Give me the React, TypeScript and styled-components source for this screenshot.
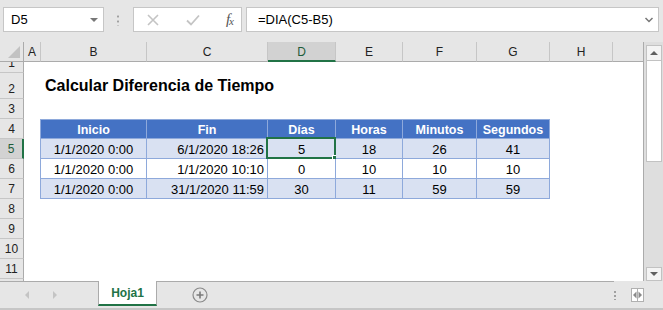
import React from 'react'
import styled, { createGlobalStyle } from 'styled-components'

const GREEN = '#217346'
const UI_FONT = `'Liberation Sans', Arial, sans-serif`

const COLUMNS = [
  { key: 'A', width: 17 },
  { key: 'B', width: 106 },
  { key: 'C', width: 121 },
  { key: 'D', width: 68 },
  { key: 'E', width: 67 },
  { key: 'F', width: 74 },
  { key: 'G', width: 73 },
  { key: 'H', width: 63 },
]
const GRID_TEMPLATE = `24px ${COLUMNS.map((c) => `${c.width}px`).join(' ')} 1fr`

type Align = 'center' | 'right'
type Variant = 'head' | 'band' | 'plain'

interface TableColumn {
  title: string
  align: Align
}

const TABLE_COLUMNS: TableColumn[] = [
  { title: 'Inicio', align: 'center' },
  { title: 'Fin', align: 'right' },
  { title: 'Días', align: 'center' },
  { title: 'Horas', align: 'center' },
  { title: 'Minutos', align: 'center' },
  { title: 'Segundos', align: 'center' },
]

const TABLE_ROWS = [
  ['1/1/2020 0:00', '6/1/2020 18:26', '5', '18', '26', '41'],
  ['1/1/2020 0:00', '1/1/2020 10:10', '0', '10', '10', '10'],
  ['1/1/2020 0:00', '31/1/2020 11:59', '30', '11', '59', '59'],
]

const ROW_HEIGHTS: Record<number, number> = { 1: 11, 2: 26 }
const SELECTED_ROW = 5
const SELECTED_COL = 'D'

const GlobalStyle = createGlobalStyle`
  html, body {
    margin: 0;
    padding: 0;
    background: #e6e6e6;
    overflow: hidden;
  }
  * {
    box-sizing: border-box;
  }
`

export default function App() {
  const sheetRows = Array.from({ length: 11 }, (_, i) => i + 1)

  return (
    <>
      <GlobalStyle />
      <Window>
        <FormulaBar>
          <NameBox>
            <span>D5</span>
            <DropTriangle />
          </NameBox>
          <VerticalDots />
          <ButtonsBox>
            <svg width="14" height="14" viewBox="0 0 14 14">
              <path d="M2 2 L12 12 M12 2 L2 12" stroke="#c4c4c4" strokeWidth="1.6" fill="none" />
            </svg>
            <svg width="16" height="14" viewBox="0 0 16 14">
              <path d="M2 7.5 L6 11.5 L14 2.5" stroke="#c4c4c4" strokeWidth="1.8" fill="none" />
            </svg>
            <FxLabel>
              f<sub>x</sub>
            </FxLabel>
          </ButtonsBox>
          <FormulaInput>
            <span>=DIA(C5-B5)</span>
            <svg width="10" height="8" viewBox="0 0 10 8">
              <path d="M1.5 2 L5 5.5 L8.5 2" stroke="#777" strokeWidth="1.5" fill="none" />
            </svg>
          </FormulaInput>
        </FormulaBar>

        <Main>
          <Sheet>
            <SheetRow $height={20}>
              <CornerCell>
                <CornerTriangle />
              </CornerCell>
              {COLUMNS.map((col) => (
                <ColHeader key={col.key} $selected={col.key === SELECTED_COL}>
                  {col.key}
                </ColHeader>
              ))}
              <ColHeaderFiller />
            </SheetRow>

            {sheetRows.map((rowNum) => (
              <SheetRow key={rowNum} $height={ROW_HEIGHTS[rowNum] ?? 20}>
                <RowHeader $selected={rowNum === SELECTED_ROW}>{rowNum}</RowHeader>
                <Cell />
                {renderRowCells(rowNum)}
                <Cell />
                <Cell />
              </SheetRow>
            ))}
            <SheetRow $height={2}>
              <RowHeader $selected={false} />
            </SheetRow>
          </Sheet>

          <VScroll>
            <ScrollButton>
              <TriangleUp />
            </ScrollButton>
            <ScrollThumb />
            <ScrollTrack />
            <ScrollButton $small>
              <TriangleDown />
            </ScrollButton>
          </VScroll>
        </Main>

        <TabBar>
          <TabNav>
            <NavArrow $dir="left" />
            <NavArrow $dir="right" />
          </TabNav>
          <SheetTab>Hoja1</SheetTab>
          <AddSheet>
            <svg width="16" height="16" viewBox="0 0 16 16">
              <circle cx="8" cy="8" r="7" stroke="#8a8a8a" strokeWidth="1.2" fill="none" />
              <path d="M8 4.5 V11.5 M4.5 8 H11.5" stroke="#7a7a7a" strokeWidth="1.6" />
            </svg>
          </AddSheet>
          <TabSpacer />
          <TabDots />
          <SplitBox>
            <svg width="13" height="14" viewBox="0 0 13 14">
              <rect x="0.5" y="0.5" width="12" height="13" fill="#fff" stroke="#b0b0b0" />
              <path d="M6.5 1 V13" stroke="#b0b0b0" />
              <path d="M5.5 3.5 L2 7 L5.5 10.5 Z" fill="#8a8a8a" />
              <path d="M7.5 3.5 L11 7 L7.5 10.5 Z" fill="#8a8a8a" />
            </svg>
          </SplitBox>
        </TabBar>
      </Window>
    </>
  )
}

function renderRowCells(rowNum: number) {
  if (rowNum === 2) {
    return (
      <>
        <TitleCell>Calcular Diferencia de Tiempo</TitleCell>
        <Cell />
        <Cell />
        <Cell />
        <Cell />
        <Cell />
      </>
    )
  }
  if (rowNum === 4) {
    return TABLE_COLUMNS.map((col, i) => (
      <TableCell key={col.title} $variant="head" $align="center" $first={i === 0} $top>
        {col.title}
      </TableCell>
    ))
  }
  if (rowNum >= 5 && rowNum <= 7) {
    const data = TABLE_ROWS[rowNum - 5]
    const variant: Variant = rowNum === 6 ? 'plain' : 'band'
    return data.map((value, i) => {
      const selected = rowNum === SELECTED_ROW && i === 2
      return (
        <TableCell key={i} $variant={variant} $align={TABLE_COLUMNS[i].align} $first={i === 0}>
          {value}
          {selected && (
            <Selection>
              <FillHandle />
            </Selection>
          )}
        </TableCell>
      )
    })
  }
  return (
    <>
      <Cell />
      <Cell />
      <Cell />
      <Cell />
      <Cell />
      <Cell />
    </>
  )
}

const Window = styled.div`
  width: 663px;
  height: 310px;
  display: flex;
  flex-direction: column;
  background: #e6e6e6;
  font-family: ${UI_FONT};
  color: #000;
`

/* ---------- formula bar ---------- */

const FormulaBar = styled.div`
  height: 42px;
  display: flex;
  align-items: flex-start;
  padding: 7px 4px 0 3px;
`

const Box = styled.div`
  height: 25px;
  background: #fff;
  border: 1px solid #c6c6c6;
  display: flex;
  align-items: center;
`

const NameBox = styled(Box)`
  width: 101px;
  padding: 0 5px 0 7px;
  justify-content: space-between;
  font-size: 13px;
`

const DropTriangle = styled.span`
  width: 0;
  height: 0;
  border-left: 4px solid transparent;
  border-right: 4px solid transparent;
  border-top: 4px solid #777;
`

const VerticalDots = styled.div`
  width: 2px;
  height: 12px;
  margin: 7px 14px 0 13px;
  background: radial-gradient(circle, #a0a0a0 1px, transparent 1.2px) 0 0 / 2px 5px repeat-y;
`

const ButtonsBox = styled(Box)`
  width: 109px;
  padding: 0 8px 0 12px;
  justify-content: space-between;
`

const FxLabel = styled.span`
  font-family: 'Liberation Serif', 'Times New Roman', serif;
  font-style: italic;
  font-size: 15px;
  color: #555;
  letter-spacing: -1px;
  line-height: 1;

  sub {
    font-size: 11px;
    vertical-align: -1px;
  }
`

const FormulaInput = styled(Box)`
  flex: 1;
  margin-left: 4px;
  padding: 0 4px 0 11px;
  justify-content: space-between;
  font-size: 13px;
`

/* ---------- sheet ---------- */

const Main = styled.div`
  display: flex;
  height: 239px;
`

const Sheet = styled.div`
  width: 644px;
  display: flex;
  flex-direction: column;
  background: #fff;
  border-right: 1px solid #ababab;
  overflow: hidden;
`

const SheetRow = styled.div<{ $height: number }>`
  display: grid;
  grid-template-columns: ${GRID_TEMPLATE};
  height: ${({ $height }) => $height}px;
  flex-shrink: 0;
`

const HeaderBase = styled.div`
  background: #e6e6e6;
  font-size: 12px;
  color: #222;
  display: flex;
  justify-content: center;
`

const CornerCell = styled(HeaderBase)`
  position: relative;
  border-right: 1px solid #ababab;
  border-bottom: 1px solid #ababab;
`

const CornerTriangle = styled.div`
  position: absolute;
  right: 3px;
  bottom: 3px;
  width: 0;
  height: 0;
  border-left: 12px solid transparent;
  border-bottom: 12px solid #c2c2c2;
`

const ColHeader = styled(HeaderBase)<{ $selected: boolean }>`
  align-items: center;
  padding-top: 1px;
  border-right: 1px solid #c6c6c6;
  background: ${({ $selected }) => ($selected ? '#d2d2d2' : '#e6e6e6')};
  color: ${({ $selected }) => ($selected ? '#1e5c3a' : '#222')};
  border-bottom: ${({ $selected }) => ($selected ? `2px solid ${GREEN}` : '1px solid #ababab')};
`

const ColHeaderFiller = styled(HeaderBase)`
  border-bottom: 1px solid #ababab;
`

const RowHeader = styled(HeaderBase)<{ $selected: boolean }>`
  align-items: flex-end;
  padding-bottom: 2px;
  overflow: hidden;
  line-height: 14px;
  border-bottom: 1px solid #c6c6c6;
  background: ${({ $selected }) => ($selected ? '#d2d2d2' : '#e6e6e6')};
  color: ${({ $selected }) => ($selected ? '#1e5c3a' : '#222')};
  border-right: ${({ $selected }) => ($selected ? `2px solid ${GREEN}` : '1px solid #ababab')};
`

const Cell = styled.div`
  background: #fff;
`

const TitleCell = styled.div`
  display: flex;
  align-items: center;
  padding-left: 4px;
  font-size: 16px;
  font-weight: bold;
  white-space: nowrap;
  overflow: visible;
  position: relative;
  z-index: 1;
`

const VARIANT_BG: Record<Variant, string> = {
  head: '#4472c4',
  band: '#d9e1f2',
  plain: '#ffffff',
}

const TableCell = styled.div<{ $variant: Variant; $align: Align; $first?: boolean; $top?: boolean }>`
  position: relative;
  display: flex;
  align-items: center;
  justify-content: ${({ $align }) => ($align === 'right' ? 'flex-end' : 'center')};
  padding: 2px 3px 0 3px;
  white-space: nowrap;
  font-size: ${({ $variant }) => ($variant === 'head' ? '12.5px' : '13px')};
  font-weight: ${({ $variant }) => ($variant === 'head' ? 'bold' : 'normal')};
  color: ${({ $variant }) => ($variant === 'head' ? '#fff' : '#000')};
  background: ${({ $variant }) => VARIANT_BG[$variant]};
  border-right: 1px solid #8ea9db;
  border-bottom: 1px solid #8ea9db;
  border-left: ${({ $first }) => ($first ? '1px solid #8ea9db' : 'none')};
  border-top: ${({ $top }) => ($top ? '1px solid #8ea9db' : 'none')};
  margin-left: ${({ $first }) => ($first ? '-1px' : '0')};
`

const Selection = styled.div`
  position: absolute;
  left: -2px;
  top: -2px;
  right: -1px;
  bottom: -1px;
  border: 2px solid ${GREEN};
  pointer-events: none;
`

const FillHandle = styled.div`
  position: absolute;
  right: -5px;
  bottom: -5px;
  width: 7px;
  height: 7px;
  background: ${GREEN};
  border: 1px solid #fff;
`

/* ---------- vertical scrollbar ---------- */

const VScroll = styled.div`
  flex: 1;
  display: flex;
  flex-direction: column;
  padding: 3px 1px 0 2px;
  background: #dedede;
`

const ScrollButton = styled.div<{ $small?: boolean }>`
  height: ${({ $small }) => ($small ? '14px' : '16px')};
  flex-shrink: 0;
  background: #f4f4f4;
  border: 1px solid #c2c2c2;
  display: flex;
  align-items: center;
  justify-content: center;
`

const TriangleUp = styled.span`
  width: 0;
  height: 0;
  border-left: 4px solid transparent;
  border-right: 4px solid transparent;
  border-bottom: 4px solid #606060;
`

const TriangleDown = styled.span`
  width: 0;
  height: 0;
  border-left: 4px solid transparent;
  border-right: 4px solid transparent;
  border-top: 4px solid #606060;
`

const ScrollThumb = styled.div`
  height: 101px;
  flex-shrink: 0;
  background: #fff;
  border: 1px solid #c2c2c2;
  border-top: none;
`

const ScrollTrack = styled.div`
  flex: 1;
`

/* ---------- tab bar ---------- */

const TabBar = styled.div`
  height: 29px;
  display: flex;
  align-items: flex-start;
  border-bottom: 2px solid #c6c6c6;
  background: #e6e6e6;
`

const TabNav = styled.div`
  width: 98px;
  height: 27px;
  display: flex;
  align-items: center;
  gap: 24px;
  padding-left: 25px;
  border-top: 1px solid #ababab;
`

const NavArrow = styled.span<{ $dir: 'left' | 'right' }>`
  width: 0;
  height: 0;
  border-top: 4px solid transparent;
  border-bottom: 4px solid transparent;
  ${({ $dir }) =>
    $dir === 'left' ? 'border-right: 4px solid #c4c4c4;' : 'border-left: 4px solid #c4c4c4;'}
`

const SheetTab = styled.div`
  width: 59px;
  height: 25px;
  background: #fff;
  border-left: 1px solid #ababab;
  border-right: 1px solid #ababab;
  border-bottom: 2px solid ${GREEN};
  display: flex;
  align-items: center;
  justify-content: center;
  padding-top: 1px;
  font-size: 12px;
  font-weight: bold;
  color: ${GREEN};
`

const AddSheet = styled.div`
  width: 85px;
  height: 27px;
  display: flex;
  align-items: center;
  justify-content: center;
  border-top: 1px solid #ababab;
`

const TabSpacer = styled.div`
  flex: 1;
  height: 27px;
  border-top: 1px solid #ababab;
`

const TabDots = styled.div`
  width: 2px;
  height: 10px;
  margin: 9px 14px 0 0;
  background: radial-gradient(circle, #a0a0a0 1px, transparent 1.2px) 0 0 / 2px 4px repeat-y;
`

const SplitBox = styled.div`
  width: 33px;
  height: 27px;
  display: flex;
  align-items: center;
  padding-left: 1px;
  padding-top: 1px;
`
